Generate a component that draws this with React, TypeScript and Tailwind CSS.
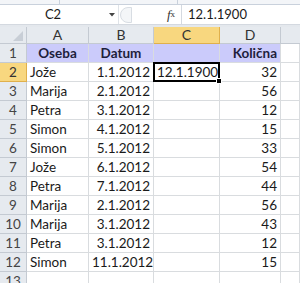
import React from 'react';

const rows: [string, string, string, string][] = [
  ['Jože', '1.1.2012', '12.1.1900', '32'],
  ['Marija', '2.1.2012', '', '56'],
  ['Petra', '3.1.2012', '', '12'],
  ['Simon', '4.1.2012', '', '15'],
  ['Simon', '5.1.2012', '', '33'],
  ['Jože', '6.1.2012', '', '54'],
  ['Petra', '7.1.2012', '', '44'],
  ['Marija', '2.1.2012', '', '56'],
  ['Marija', '3.1.2012', '', '43'],
  ['Petra', '3.1.2012', '', '12'],
  ['Simon', '11.1.2012', '', '15'],
];

const grid = 'grid grid-cols-[27px_62px_65px_66px_61px_1fr] h-[19px]';
const cell = 'border-r border-b border-[#d9dcdf] px-[3px] leading-[18px] whitespace-nowrap overflow-hidden';

export default function App() {
  return (
    <div className="w-[300px] h-[283px] overflow-hidden bg-white text-[#1a1a1a] font-['Lato','Open_Sans',sans-serif] text-[13.5px]">
      {/* ribbon edge */}
      <div className="h-[5px] bg-[#f3f5f8] border-b border-[#c9d1dc] flex">
        <div className="w-[60px] border-r border-[#c9d1dc]" />
        <div className="w-[118px] border-r border-[#c9d1dc]" />
      </div>

      {/* formula bar */}
      <div className="h-[20px] flex items-stretch bg-white border-b border-[#d4d9e0]">
        <div className="w-[106px] flex items-center justify-center text-[13px]">C2</div>
        <div className="w-[12px] flex items-center justify-center">
          <svg width="6" height="4" viewBox="0 0 6 4"><path d="M0 0h6L3 3.5z" fill="#444" /></svg>
        </div>
        <div className="w-[2px] border-l border-[#dfe3e8]" />
        <div className="w-[14px] flex items-center">
          <div className="w-[12px] h-[16px] rounded-l-full border border-[#d8dde3] bg-[#f4f6f8]" />
        </div>
        <div className="flex-1" />
        <div className="w-[16px] flex items-center justify-center italic font-['Liberation_Serif',serif] text-[13px] text-[#333]">
          f<span className="text-[9px] not-italic">x</span>
        </div>
        <div className="w-[3px] border-r border-[#d4d9e0]" />
        <div className="w-[118px] pl-[6px] flex items-center text-[13px]">12.1.1900</div>
      </div>

      <div className="h-[2px] bg-[#e4e8ed]" />

      {/* column headers */}
      <div className="grid grid-cols-[27px_62px_65px_66px_61px_1fr] h-[17px] bg-[#e6eaef] text-[#333] text-[14px] leading-[16px]">
        <div className="border-r border-b border-[#c4cad2] relative">
          <svg className="absolute right-[3px] bottom-[2px]" width="10" height="10" viewBox="0 0 10 10">
            <path d="M10 0V10H0z" fill="#c8ced6" />
          </svg>
        </div>
        <div className="border-r border-b border-[#c4cad2] text-center">A</div>
        <div className="border-r border-b border-[#c4cad2] text-center">B</div>
        <div className="border-r border-b border-[#e0b04c] text-center bg-[#f8d77f]">C</div>
        <div className="border-r border-b border-[#c4cad2] text-center">D</div>
        <div className="border-b border-[#c4cad2]" />
      </div>

      {/* row 1 */}
      <div className={grid}>
        <div className="border-r border-b border-[#c4cad2] bg-[#e6eaef] text-center text-[#444] leading-[18px]">1</div>
        <div className={`${cell} bg-[#cbcbfb] font-bold text-center text-[#1e1e3c]`}>Oseba</div>
        <div className={`${cell} bg-[#cbcbfb] font-bold text-center text-[#1e1e3c]`}>Datum</div>
        <div className={`${cell} bg-[#cbcbfb]`} />
        <div className={`${cell} bg-[#cbcbfb] font-bold text-right text-[#1e1e3c]`}>Količna</div>
        <div className={cell} />
      </div>

      {rows.map((r, i) => {
        const n = i + 2;
        const active = n === 2;
        return (
          <div key={n} className={grid}>
            <div
              className={`border-r border-b text-center leading-[18px] ${
                active ? 'bg-[#f8d77f] border-[#e0b04c] text-[#333]' : 'bg-[#e6eaef] border-[#c4cad2] text-[#444]'
              }`}
            >
              {n}
            </div>
            <div className={cell}>{r[0]}</div>
            <div className={`${cell} text-right`}>{r[1]}</div>
            {active ? (
              <div className="relative border-2 border-black -ml-[1px] -mt-[1px] h-[20px] px-[2px] leading-[16px] whitespace-nowrap">
                {r[2]}
                <div className="absolute -right-[4px] -bottom-[4px] w-[6px] h-[6px] bg-black border border-white" />
              </div>
            ) : (
              <div className={cell}>{r[2]}</div>
            )}
            <div className={`${cell} text-right`}>{r[3]}</div>
            <div className={cell} />
          </div>
        );
      })}

      <div className={grid}>
        <div className="border-r border-b border-[#c4cad2] bg-[#e6eaef] text-center text-[#444] leading-[18px]">13</div>
        <div className={cell} />
        <div className={cell} />
        <div className={cell} />
        <div className={cell} />
        <div className={cell} />
      </div>
    </div>
  );
}
